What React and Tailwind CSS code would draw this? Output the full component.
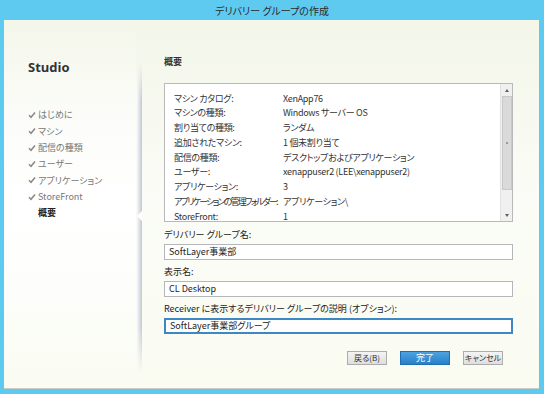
import React from 'react';

const summary = [
  ['マシン カタログ:', 'XenApp76'],
  ['マシンの種類:', 'Windows サーバー OS'],
  ['割り当ての種類:', 'ランダム'],
  ['追加されたマシン:', '1 個未割り当て'],
  ['配信の種類:', 'デスクトップおよびアプリケーション'],
  ['ユーザー:', 'xenappuser2 (LEE\\xenappuser2)'],
  ['アプリケーション:', '3'],
  ['アプリケーションの管理フォルダー:', 'アプリケーション\\', true],
  ['StoreFront:', '1'],
];

const steps = ['はじめに', 'マシン', '配信の種類', 'ユーザー', 'アプリケーション', 'StoreFront'];

const Check = () => (
  <svg width="8" height="8" viewBox="0 0 8 8" className="shrink-0">
    <path d="M1 4.2 L3 6.2 L7 1.5" fill="none" stroke="#8a8a8a" strokeWidth="1.6" />
  </svg>
);

const Field = ({ label, value, focused }) => (
  <div className="flex flex-col">
    <div className="h-[12px] leading-[12px] text-[9px] text-[#222]">{label}</div>
    <div
      className={`mt-[3px] h-[16px] w-[349px] bg-white flex items-center pl-[4px] text-[9px] text-[#222] ${
        focused ? 'border-2 border-[#3d87c4]' : 'border border-[#b4b6bb]'
      }`}
    >
      {value}
    </div>
  </div>
);

const App = () => {
  return (
    <div className="w-[544px] h-[394px] bg-[#5fcaf0] flex flex-col font-['Noto_Sans_CJK_JP',sans-serif] [font-feature-settings:'palt'] overflow-hidden">
      <div className="h-[20px] flex items-center justify-center text-[10px] text-[#2a2a2a]">
        デリバリー グループの作成
      </div>

      <div className="flex-1 ml-[4px] mr-[5px] mb-[5px] flex bg-gradient-to-b from-[#f3f6e9] via-[#fbfcf7] to-[#fafcf2] border-b border-[#c9cccc]">
        {/* sidebar */}
        <div className="w-[138px] relative flex">
          <div className="flex-1 pl-[24px] pt-[39px] bg-gradient-to-b from-transparent via-white to-transparent">
            <div className="text-[13px] font-bold text-[#333] leading-[16px] font-['Open_Sans',sans-serif]">Studio</div>
            <div className="mt-[32px] flex flex-col">
              {steps.map((s) => (
                <div key={s} className="h-[16.3px] flex items-center gap-[2px] text-[9px] text-[#777]">
                  <Check />
                  <span>{s}</span>
                </div>
              ))}
              <div className="h-[16.3px] flex items-center pl-[10px] text-[9px] font-bold text-[#222]">
                概要
              </div>
            </div>
          </div>
          <div className="w-[6px] mt-[43px] mb-[14px] bg-gradient-to-r from-[#ffffff] to-[#c3c8d1] relative [mask-image:linear-gradient(to_bottom,transparent,black_12%,black_85%,transparent)]">
            <div className="absolute top-[148px] right-0 w-0 h-0 border-y-[5px] border-y-transparent border-r-[5px] border-r-white" />
          </div>
        </div>

        {/* main */}
        <div className="flex-1 pl-[22px] pt-[36px] flex flex-col">
          <div className="h-[12px] leading-[12px] text-[9px] font-bold text-[#333]">概要</div>

          <div className="mt-[15px] w-[349px] h-[139px] border border-[#b9b9b9] bg-white flex overflow-hidden">
            <div className="flex-1 pl-[9px] pt-[7px]">
              {summary.map(([k, v, tight]) => (
                <div key={k} className="h-[14.75px] flex items-center text-[9px] text-[#333] whitespace-nowrap tracking-[-0.3px]">
                  <span className={`w-[109px] shrink-0 ${tight ? 'tracking-[-1.8px]' : ''}`}>{k}</span>
                  <span>{v}</span>
                </div>
              ))}
            </div>
            <div className="w-[12px] bg-[#f0f0f0] border-l border-[#e2e2e2] flex flex-col items-center">
              <div className="h-[12px] flex items-center justify-center">
                <div className="w-0 h-0 border-x-[2.5px] border-x-transparent border-b-[3px] border-b-[#606060]" />
              </div>
              <div className="w-[10px] h-[94px] bg-[#dadada] border border-[#c8c8c8] flex items-center justify-center">
                <div className="w-[2px] h-[2px] bg-[#999]" />
              </div>
              <div className="flex-1" />
              <div className="h-[12px] flex items-center justify-center">
                <div className="w-0 h-0 border-x-[2.5px] border-x-transparent border-t-[3px] border-t-[#606060]" />
              </div>
            </div>
          </div>

          <div className="mt-[7px] flex flex-col gap-[6px]">
            <Field label="デリバリー グループ名:" value="SoftLayer事業部" />
            <Field label="表示名:" value="CL Desktop" />
            <Field label="Receiver に表示するデリバリー グループの説明 (オプション):" value="SoftLayer事業部グループ" focused />
          </div>

          <div className="mt-[17px] w-[339px] flex justify-end gap-[13px]">
            <button className="w-[40px] h-[14px] border border-[#acacac] bg-gradient-to-b from-[#f4f4f4] to-[#dedede] text-[8px] text-[#333] flex items-center justify-center whitespace-nowrap">
              戻る(B)
            </button>
            <button className="w-[50px] h-[14px] border border-[#1f6fb0] bg-gradient-to-b from-[#4aa3e0] to-[#2a80c8] text-[9px] text-white flex items-center justify-center whitespace-nowrap">
              完了
            </button>
            <button className="w-[40px] h-[14px] border border-[#acacac] bg-gradient-to-b from-[#f4f4f4] to-[#dedede] text-[8px] text-[#333] flex items-center justify-center whitespace-nowrap">
              キャンセル
            </button>
          </div>
        </div>
      </div>
    </div>
  );
};

export default App;
